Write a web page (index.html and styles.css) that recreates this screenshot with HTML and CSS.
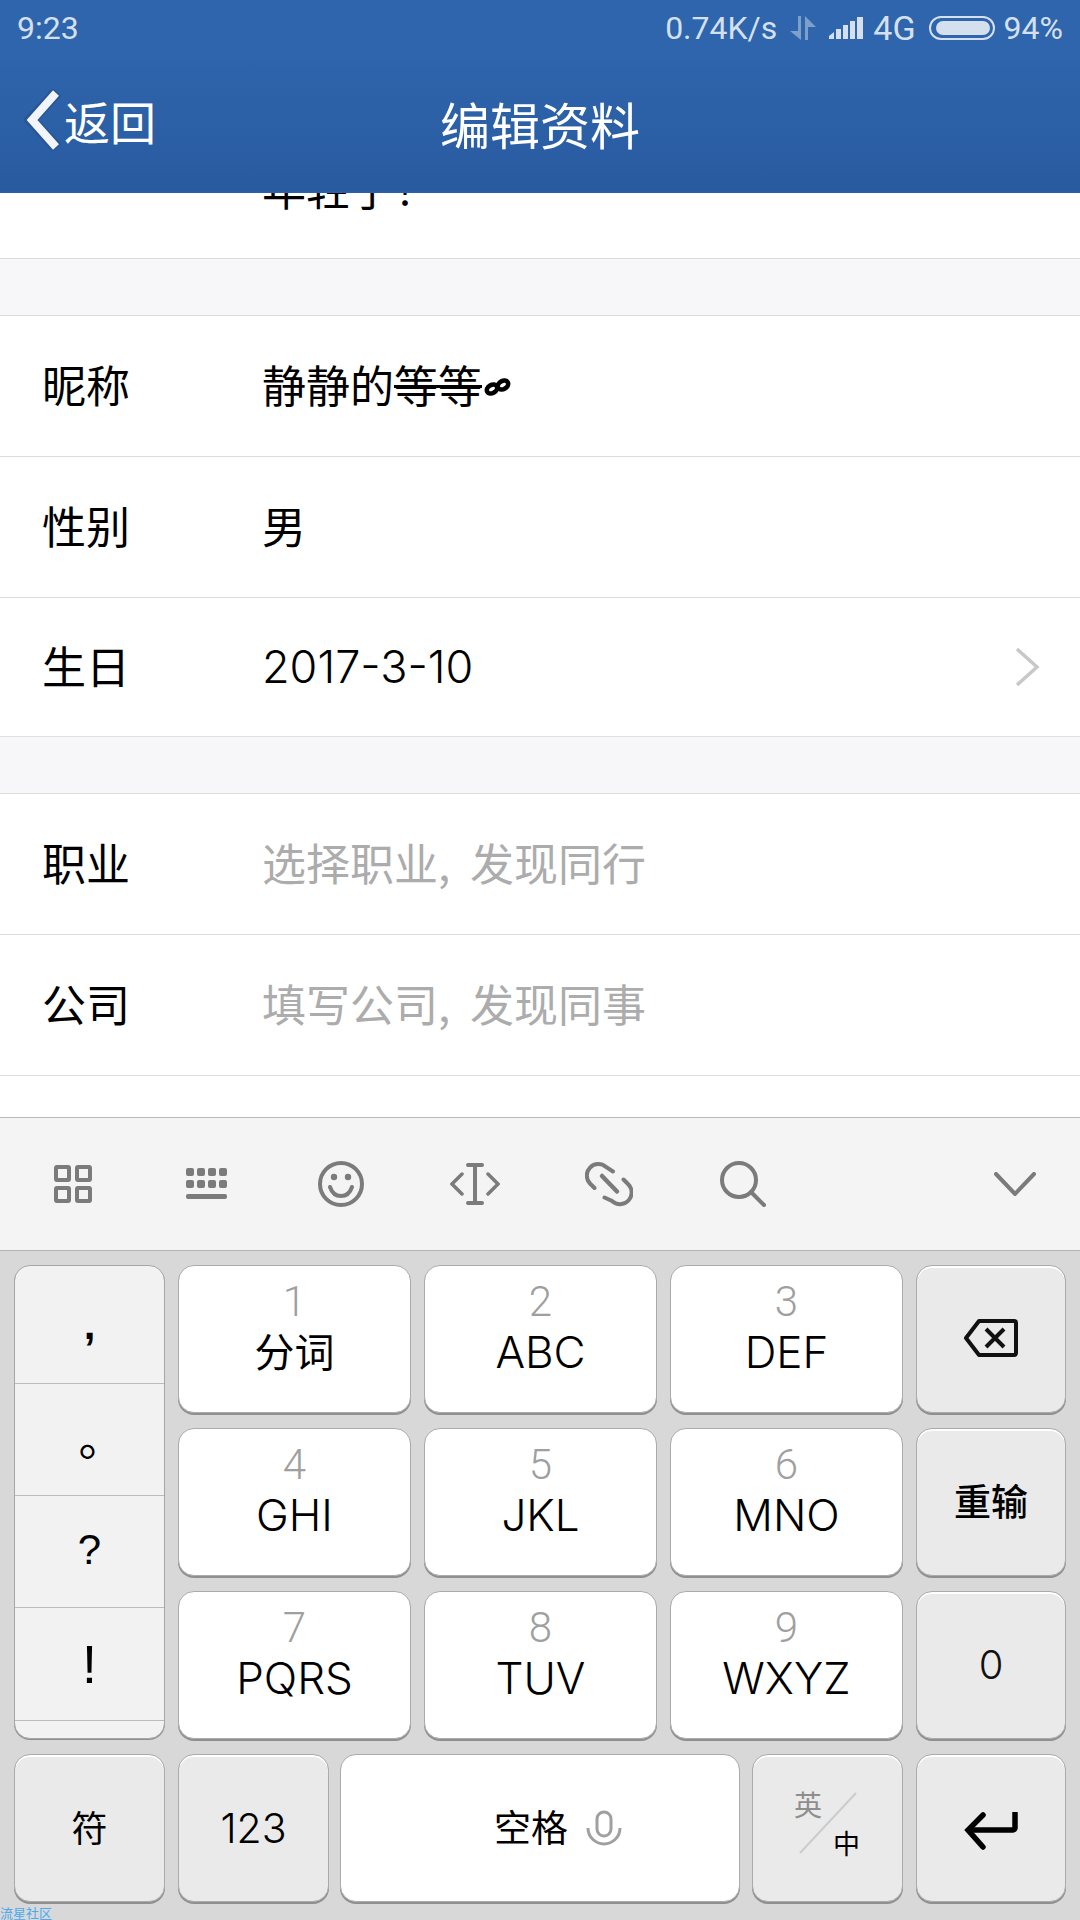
FILE: index.html
```html
<!DOCTYPE html>
<html lang="zh">
<head>
<meta charset="utf-8">
<title>编辑资料</title>
<link rel="stylesheet" href="styles.css">
</head>
<body>
<div class="screen">
  <header class="header">
    <div class="status">
      <span>9:23</span>
      <div class="status-right">
        <span class="speed">0.74K/s</span>
        <svg class="ic-arrows" width="26" height="24" viewBox="0 0 26 24"><path d="M0 15h8V0h3v24z" fill="#7f9fcb"/><path d="M15 24V0l11 11h-8v13z" fill="#7f9fcb"/></svg>
        <svg class="ic-signal" width="34" height="22" viewBox="0 0 34 22" fill="#d5e0ee"><path d="M0 22v-3l5-4v7z"/><rect x="7" y="12" width="5" height="10"/><rect x="14" y="8" width="5" height="14"/><rect x="21" y="4" width="5" height="18"/><rect x="28" y="0" width="6" height="22"/></svg>
        <span class="net">4G</span>
        <svg class="ic-batt" width="66" height="24" viewBox="0 0 66 24"><rect x="1" y="1" width="64" height="22" rx="11" fill="none" stroke="#d5e0ee" stroke-width="2"/><rect x="7" y="5" width="54" height="14" rx="7" fill="#d5e0ee"/></svg>
        <span class="pct">94%</span>
      </div>
    </div>
    <div class="navbar">
      <div class="back">
        <svg class="ic-back" width="38" height="62" viewBox="0 0 38 62"><path d="M33 3 7 31l26 28" fill="none" stroke="#2a5592" stroke-width="12"/><path d="M32 4 8 31l24 27" fill="none" stroke="#f1f4f8" stroke-width="8"/></svg>
        <span class="back-text">返回</span>
      </div>
      <h1 class="title">编辑资料</h1>
    </div>
  </header>

  <main class="content">
    <div class="row-cut"><span class="cut-text">年轻了！</span></div>
    <div class="band"></div>
    <div class="row"><span class="label">昵称</span><span class="value">静静的<span class="strike">等等</span><svg class="ic-loop" width="27" height="18" viewBox="0 0 27 18"><g fill="none" stroke="#000" stroke-width="4.500"><ellipse cx="8" cy="11" rx="5.500" ry="4" transform="rotate(-30 8 11)"/><ellipse cx="19" cy="7" rx="5.500" ry="4" transform="rotate(-30 19 7)"/></g></svg></span></div>
    <div class="row"><span class="label">性别</span><span class="value">男</span></div>
    <div class="row row-short"><span class="label">生日</span><span class="value-date">2017-3-10</span>
      <svg class="ic-next" width="26" height="40" viewBox="0 0 26 40"><path d="M3 2l20 18L3 38" fill="none" stroke="#c8c8c8" stroke-width="3.500"/></svg>
    </div>
    <div class="band"></div>
    <div class="row"><span class="label">职业</span><span class="value placeholder">选择职业, 发现同行</span></div>
    <div class="row"><span class="label">公司</span><span class="value placeholder">填写公司, 发现同事</span></div>
    <div class="row-tail"></div>
  </main>

  <div class="toolbar">
    <div class="tool">
      <svg width="38" height="38" viewBox="0 0 38 38" fill="none" stroke="#7b7b7b" stroke-width="4"><rect x="2" y="2" width="13" height="13" rx="1"/><rect x="23" y="2" width="13" height="13" rx="1"/><rect x="2" y="23" width="13" height="13" rx="1"/><rect x="23" y="23" width="13" height="13" rx="1"/></svg>
    </div>
    <div class="tool">
      <svg width="42" height="32" viewBox="0 0 42 32" fill="#7b7b7b"><rect x="0" y="0" width="8" height="8" rx="2"/><rect x="11" y="0" width="8" height="8" rx="2"/><rect x="22" y="0" width="8" height="8" rx="2"/><rect x="33" y="0" width="8" height="8" rx="2"/><rect x="0" y="12" width="8" height="8" rx="2"/><rect x="11" y="12" width="8" height="8" rx="2"/><rect x="22" y="12" width="8" height="8" rx="2"/><rect x="33" y="12" width="8" height="8" rx="2"/><rect x="0" y="26" width="41" height="5" rx="2"/></svg>
    </div>
    <div class="tool">
      <svg width="46" height="46" viewBox="0 0 46 46" fill="none" stroke="#7b7b7b" stroke-width="4"><circle cx="23" cy="23" r="21"/><path d="M12 26c2 6 6 9 11 9s9-3 11-9" stroke-width="4" stroke-linecap="round"/><circle cx="16" cy="16" r="3.200" fill="#7b7b7b" stroke="none"/><circle cx="30" cy="16" r="3.200" fill="#7b7b7b" stroke="none"/></svg>
    </div>
    <div class="tool">
      <svg width="50" height="42" viewBox="0 0 50 42" fill="none" stroke="#7b7b7b" stroke-width="3.500" stroke-linecap="round"><path d="M12 11 2 21l10 10M38 11l10 10-10 10"/><path d="M25 2v38" stroke-width="4"/><path d="M18 2h14M18 40h14" stroke-width="4"/></svg>
    </div>
    <div class="tool">
      <svg width="48" height="46" viewBox="0 0 48 46" fill="none" stroke="#7b7b7b" stroke-width="4" stroke-linecap="round"><path d="M9.500 27 5 22.500A11.500 11.500 0 0 1 21 6l7 4.500"/><path d="M38.500 18.500 43 23a11.500 11.500 0 0 1-16 17l-7.500-3.500"/><path d="M17 15l15 15.500" stroke-width="4.500"/></svg>
    </div>
    <div class="tool">
      <svg width="46" height="46" viewBox="0 0 46 46" fill="none" stroke="#7b7b7b" stroke-width="4"><circle cx="19" cy="19" r="17"/><path d="M31 31l13 13" stroke-linecap="round"/></svg>
    </div>
    <svg class="ic-collapse" width="42" height="24" viewBox="0 0 42 24"><path d="M2 2l19 20L40 2" fill="none" stroke="#7b7b7b" stroke-width="4" stroke-linecap="round"/></svg>
  </div>

  <section class="keyboard">
    <div class="keys-top">
      <div class="punct">
        <div class="punct-cell punct-comma">,</div>
        <div class="punct-cell punct-dot">。</div>
        <div class="punct-cell punct-ask">?</div>
        <div class="punct-cell punct-bang">!</div>
        <div class="punct-tail"></div>
      </div>
      <div class="key key-t9"><span class="digit">1</span><span class="letters cjk">分词</span></div>
      <div class="key key-t9"><span class="digit">2</span><span class="letters">ABC</span></div>
      <div class="key key-t9"><span class="digit">3</span><span class="letters">DEF</span></div>
      <div class="key key-gray">
        <svg class="ic-del" width="54" height="38" viewBox="0 0 54 38" fill="none" stroke="#111" stroke-width="4"><path d="M15 2h35a2 2 0 0 1 2 2v30a2 2 0 0 1-2 2H15L2 19z" stroke-linejoin="round"/><path d="M22 10l18 18M40 10 22 28" stroke-width="4"/></svg>
      </div>
      <div class="key key-t9"><span class="digit">4</span><span class="letters">GHI</span></div>
      <div class="key key-t9"><span class="digit">5</span><span class="letters">JKL</span></div>
      <div class="key key-t9"><span class="digit">6</span><span class="letters">MNO</span></div>
      <div class="key key-gray"><span class="key-reset">重输</span></div>
      <div class="key key-t9"><span class="digit">7</span><span class="letters">PQRS</span></div>
      <div class="key key-t9"><span class="digit">8</span><span class="letters">TUV</span></div>
      <div class="key key-t9"><span class="digit">9</span><span class="letters">WXYZ</span></div>
      <div class="key key-gray"><span class="key-zero">0</span></div>
    </div>
    <div class="keys-bottom">
      <div class="key key-gray key-side key-wide"><span class="key-sym">符</span></div>
      <div class="key key-gray key-side key-wide"><span class="key-num">123</span></div>
      <div class="key key-space"><span class="space-text">空格</span>
        <svg width="36" height="36" viewBox="0 0 36 36" fill="none" stroke="#a0a0a0" stroke-width="3"><rect x="11" y="2" width="14" height="24" rx="7"/><path d="M2 18a16 16 0 0 0 32 0"/></svg>
      </div>
      <div class="key key-gray key-side key-wide key-lang">
        <span class="lang-en">英</span>
        <svg class="lang-slash" width="60" height="62" viewBox="0 0 60 62"><path d="M58 1 2 61" stroke="#cccccc" stroke-width="2"/></svg>
        <span class="lang-zh">中</span>
      </div>
      <div class="key key-gray key-side">
        <svg class="ic-enter" width="54" height="38" viewBox="0 0 54 38" fill="none" stroke="#000" stroke-width="5.500"><path d="M51 1v15a2 2 0 0 1-2 2H5" stroke-linecap="round"/><path d="M19 3 4 18l15 17" stroke-linecap="round"/></svg>
      </div>
    </div>
    <span class="watermark">流星社区</span>
  </section>
</div>
</body>
</html>
```
FILE: styles.css
```css
* { box-sizing: border-box; }
html, body { margin: 0; padding: 0; }
body { background: #fff; font-family: "Noto Sans CJK SC", "Noto Sans", sans-serif; color: #000; }
.screen { width: 1080px; height: 1920px; display: flex; flex-direction: column; overflow: hidden; }

/* header */
.header { height: 193px; flex: none; background: linear-gradient(180deg, #2e65ac 0, #2e65ac 56px, #2d63aa 70px, #2c60a6 130px, #285a9f 190px, #2d62a9 193px); color: #fff; }
.status { height: 56px; padding: 0 17px 0 17px; display: flex; justify-content: space-between; align-items: center; color: #d5e0ee; font: 400 32px/56px Roboto, sans-serif; }
.status-right { display: flex; align-items: center; }
.ic-arrows { margin-left: 13px; }
.ic-signal { margin-left: 13px; }
.net { margin-left: 10px; font-size: 34px; }
.ic-batt { margin-left: 13px; }
.pct { margin-left: 9px; }
.navbar { height: 137px; display: flex; align-items: center; position: relative; }
.back { display: flex; align-items: center; padding-left: 24px; margin-top: -10px; }
.back-text { font-size: 46px; line-height: 60px; margin-left: 2px; }
.title { position: absolute; left: 0; right: 0; top: 37px; margin: 0; text-align: center; font-size: 50px; line-height: 60px; font-weight: 400; }

/* form */
.content { height: 924px; flex: none; background: #fff; overflow: hidden; }
.row-cut { height: 66px; border-bottom: 1px solid #dcdce0; display: flex; align-items: flex-end; padding: 0 0 41px 262px; overflow: hidden; }
.cut-text { font-size: 44px; line-height: 60px; flex: none; }
.band { height: 57px; background: #f7f7f9; border-bottom: 1px solid #dcdce0; }
.row { height: 141px; border-bottom: 1px solid #dcdcdc; display: flex; align-items: center; padding: 0 40px 0 42px; font-size: 44px; }
.row-short { height: 139px; border-bottom-color: #e0e0e0; }
.label { width: 220px; flex: none; padding-bottom: 4px; }
.value { flex: 1; display: flex; align-items: center; padding-bottom: 4px; }
.value-date { flex: 1; font: 350 45px/60px Inter, sans-serif; }
.strike { text-decoration: line-through; text-decoration-thickness: 3px; }
.ic-loop { margin-top: 6px; margin-left: 2px; }
.placeholder { color: #acacac; word-spacing: 10px; white-space: pre; }
.row-tail { height: 41px; }

/* toolbar */
.toolbar { height: 134px; flex: none; background: #f4f4f4; border-top: 1px solid #b8b8b8; border-bottom: 1px solid #b4b4b4; display: flex; align-items: center; padding: 0 44px 0 6px; }
.tool { width: 134px; flex: none; display: flex; justify-content: center; }
.ic-collapse { margin-left: auto; }

/* keyboard */
.keyboard { flex: 1; background: #d8d8d8; padding: 14px 14px 0; position: relative; }
.keys-top { display: grid; grid-template-columns: 151px 233px 233px 233px 150px; grid-auto-rows: 148px; column-gap: 13px; row-gap: 15px; }
.keys-bottom { display: flex; gap: 13px; margin-top: 15px; height: 148px; }
.key { background: #fff; border: 1px solid #ababab; border-radius: 16px; box-shadow: 0 2px 0 #8f8f8f; display: flex; flex-direction: column; align-items: center; justify-content: center; }
.key-t9 { padding-bottom: 25px; }
.key-gray { background: #eaeaea; box-shadow: inset 0 2px 0 #fff, 0 2px 0 #8f8f8f; }
.key-side { width: 150px; flex: none; }
.key-wide { width: 151px; }
.key-space { flex: 1; flex-direction: row; gap: 18px; padding-left: 36px; margin: 0 -1px 0 -2px; }
.digit { font: 300 42px/50px Roboto, sans-serif; color: #9f9f9f; }
.letters { font: 300 44px/50px Inter, sans-serif; }
.letters.cjk { font-family: "Noto Sans CJK SC", sans-serif; font-weight: 400; font-size: 40px; line-height: 46px; height: 50px; }
.key-reset { font-size: 37px; font-weight: 500; line-height: 46px; padding-bottom: 4px; }
.key-zero { font: 300 40px/46px Inter, sans-serif; color: #111; }
.key-sym { font-size: 36px; line-height: 46px; padding-bottom: 4px; }
.key-num { font: 300 41px/46px Inter, sans-serif; }
.space-text { font-size: 37px; font-weight: 400; line-height: 46px; padding-bottom: 4px; }
.ic-del { margin-top: -3px; }
.ic-enter { margin-top: 6px; }

.punct { grid-row: span 3; background: #f2f2f2; border: 1px solid #a6a6a6; border-radius: 16px; box-shadow: 0 1px 0 #8f8f8f; display: flex; flex-direction: column; overflow: hidden; }
.punct-cell { flex: none; height: 112px; border-bottom: 1px solid #bcbcbc; display: flex; align-items: center; justify-content: center; font: 400 42px/46px "Liberation Sans", sans-serif; }
.punct-comma { height: 118px; font-weight: 700; }
.punct-dot { font-family: "Noto Sans CJK SC", sans-serif; font-size: 46px; padding: 0 0 10px 24px; }
.punct-ask { padding-bottom: 4px; }
.punct-bang { height: 113px; font-size: 54px; }
.punct-tail { flex: 1; }

.key-lang { position: relative; }
.lang-en { position: absolute; left: 41px; top: 33px; font-size: 28px; line-height: 32px; color: #8e8e8e; }
.lang-zh { position: absolute; left: 80px; top: 72px; font-size: 27px; line-height: 32px; color: #000; }
.lang-slash { position: absolute; left: 45px; top: 37px; }
.watermark { position: absolute; left: 0; bottom: 0; font-size: 13px; line-height: 14px; color: #4aa9f2; }
```
